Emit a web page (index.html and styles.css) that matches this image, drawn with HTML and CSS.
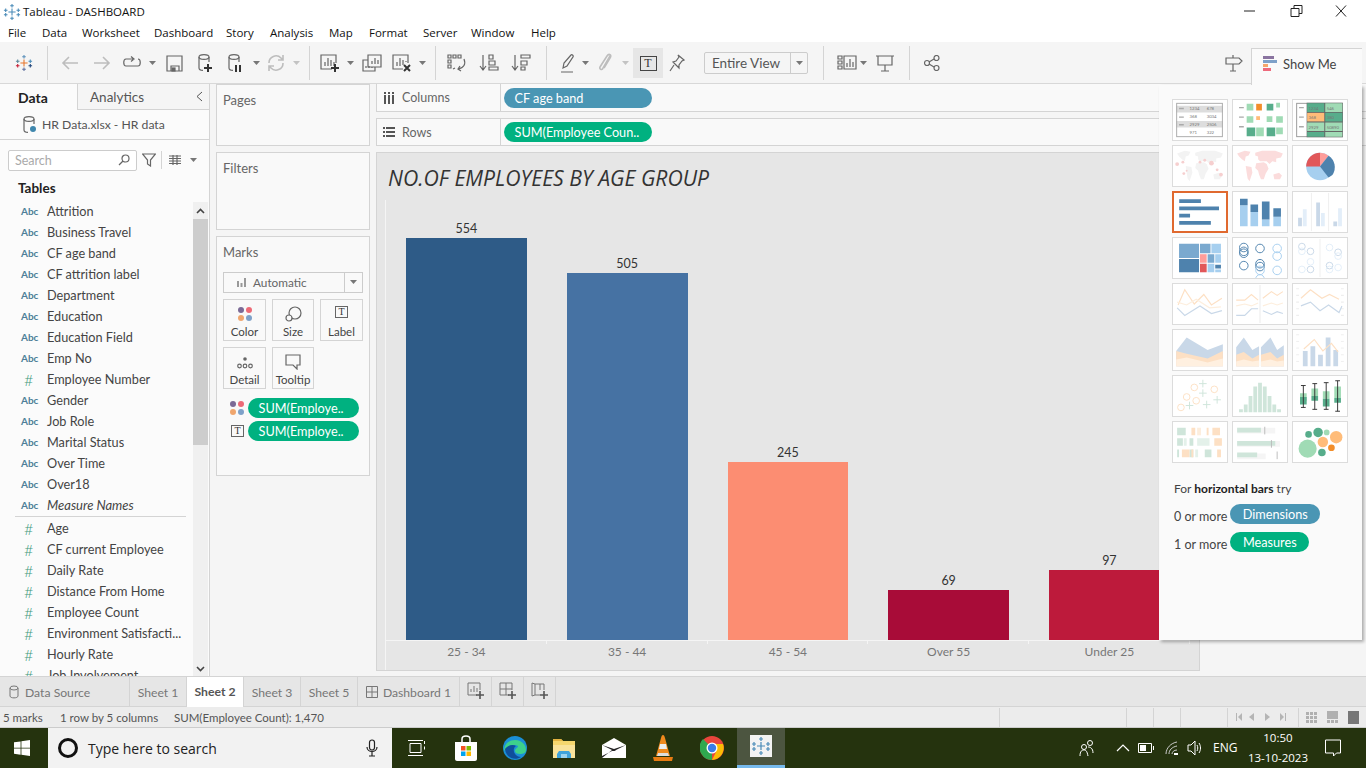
FILE: index.html
```html
<!DOCTYPE html>
<html>
<head>
  <meta charset="UTF-8">
  <title>Tableau - DASHBOARD</title>
  <link rel="stylesheet" href="styles.css">
</head>
<body>
<svg class="defs" width="0" height="0">
  <defs>
    <g id="logo-blue" stroke="#4a8bb8" stroke-width="1.2" fill="none">
      <path d="M10 6v8M6 10h8M10 1v4M8 3h4M10 15v4M8 17h4M3 6v4M1 8h4M17 6v4M15 8h4M3 11v4M1 13h4M17 11v4M15 13h4"/>
    </g>
    <g id="world">
      <path d="M4 8l8-3 6 1-2 4-3 1-1 5-3-2-3-3zM13 21l6 1 1 6-3 9-2-3-1-6zM23 7l7-2 14 0 8 3-2 4-5 1 0 4-4-1-3 3-3-3-7 0-2-2 0-3 -3-1zM24 18l8-1 3 2 2 5-3 5-2 6-3 0-2-5-1-4-3-3zM42 30l6-2 3 3-2 4-6 0z"/>
    </g>
    <g id="cyl" fill="none" stroke="#666" stroke-width="1.2">
      <ellipse cx="8" cy="4" rx="5" ry="2.4"/>
      <path d="M3 4v11c0 1.5 2 2.4 4 2.4M13 4v5"/>
    </g>
    <g id="dots4">
      <circle cx="4" cy="4" r="3" fill="#7b6a96"/><circle cx="12" cy="4" r="3" fill="#ed6a76"/>
      <circle cx="4" cy="12" r="3" fill="#f0a66e"/><circle cx="12" cy="12" r="3" fill="#7ea1c9"/>
    </g>
    <path id="caret" d="M0 0h7l-3.5 4z" fill="#777"/>
  </defs>
</svg>

<div class="app">
  <div class="titlebar">
    <svg class="title-logo" width="18" height="18" viewBox="0 0 20 20"><use href="#logo-blue"/></svg>
    <span class="title-text">Tableau - DASHBOARD</span>
    <div class="win-btns">
      <svg width="46" height="14" viewBox="0 0 46 14"><path d="M13 7h11" stroke="#222" fill="none"/></svg>
      <svg width="46" height="14" viewBox="0 0 46 14"><path d="M14 4.5h8v8h-8zM17 4.500v-3h8v8h-3" stroke="#222" fill="none"/></svg>
      <svg width="46" height="14" viewBox="0 0 46 14"><path d="M13 1.500l10 11M23 1.500l-10 11" stroke="#222" fill="none"/></svg>
    </div>
  </div>

  <div class="menubar">
    <span class="menu-item m-file">File</span>
    <span class="menu-item m-data">Data</span>
    <span class="menu-item m-worksheet">Worksheet</span>
    <span class="menu-item m-dashboard">Dashboard</span>
    <span class="menu-item m-story">Story</span>
    <span class="menu-item m-analysis">Analysis</span>
    <span class="menu-item m-map">Map</span>
    <span class="menu-item m-format">Format</span>
    <span class="menu-item m-server">Server</span>
    <span class="menu-item m-window">Window</span>
    <span class="menu-item">Help</span>
  </div>

  <div class="toolbar">
    <div class="tool w32">
      <svg width="18" height="18" viewBox="0 0 20 20" fill="none" stroke-width="1.2">
        <path d="M10 6v8M6 10h8" stroke="#e8762c"/><path d="M10 1v4M8 3h4" stroke="#5b8fb9"/><path d="M10 15v4M8 17h4" stroke="#5f6f9e"/>
        <path d="M3 6v4M1 8h4" stroke="#59879b"/><path d="M17 6v4M15 8h4" stroke="#4a8bb8"/><path d="M3 11v4M1 13h4" stroke="#c72037"/><path d="M17 11v4M15 13h4" stroke="#1f447a"/>
      </svg>
    </div>
    <div class="tool-sep w14"></div>
    <div class="tool w32"><svg width="18" height="16" viewBox="0 0 18 16" class="stroke-off"><path d="M17 8H2M8 2L2 8l6 6"/></svg></div>
    <div class="tool w32"><svg width="18" height="16" viewBox="0 0 18 16" class="stroke-off"><path d="M1 8h15M10 2l6 6-6 6"/></svg></div>
    <div class="tool w28"><svg width="20" height="14" viewBox="0 0 20 14" class="stroke-on"><path d="M11 3H4C1 3 1 10 4 10h12c3 0 3-7 0-7M9 0.500l3 2.500-3 2.500"/></svg></div>
    <div class="tool w12"><svg width="7" height="4"><use href="#caret"/></svg></div>
    <div class="tool w32"><svg width="17" height="17" viewBox="0 0 17 17" class="stroke-on"><path d="M1 1h15v15H1zM5 16v-5h8v5"/><rect x="6" y="13" width="3" height="3" fill="#666"/></svg></div>
    <div class="tool w30"><svg width="18" height="20" viewBox="0 0 18 20"><use href="#cyl"/><path d="M12 11v8M8 15h8" stroke="#333" stroke-width="2"/></svg></div>
    <div class="tool w30"><svg width="18" height="20" viewBox="0 0 18 20"><use href="#cyl"/><path d="M10 12v7M14 12v7" stroke="#333" stroke-width="2"/></svg></div>
    <div class="tool w12"><svg width="7" height="4"><use href="#caret"/></svg></div>
    <div class="tool w28"><svg width="18" height="18" viewBox="0 0 18 18" class="stroke-off"><path d="M2 9a7 7 0 0 1 12-5l2 2M16 9a7 7 0 0 1-12 5l-2-2M16 1v5h-5M2 17v-5h5"/></svg></div>
    <div class="tool w12"><svg width="7" height="4"><use href="#caret" opacity=".4"/></svg></div>
    <div class="tool-sep w14"></div>
    <div class="tool w28"><svg width="20" height="20" viewBox="0 0 20 20" class="stroke-on"><path d="M12 16H1V2h15v8M5 13V9M8 13V5M11 13V7M14 13V9"/><path d="M15 11v8M11 15h8" stroke="#333" stroke-width="2"/></svg></div>
    <div class="tool w12"><svg width="7" height="4"><use href="#caret"/></svg></div>
    <div class="tool w32"><svg width="20" height="18" viewBox="0 0 20 18" class="stroke-on"><path d="M6 1h13v12H6zM10 10V7M13 10V4M16 10V6"/><path d="M6 6H1v11h12v-4M4 14v-2M7 14v-2M10 14v-1"/></svg></div>
    <div class="tool w28"><svg width="20" height="20" viewBox="0 0 20 20" class="stroke-on"><path d="M11 16H1V2h15v8M5 13V9M8 13V5M11 12V7M14 9V8"/><path d="M12 12l6 6M18 12l-6 6" stroke="#333" stroke-width="2"/></svg></div>
    <div class="tool w12"><svg width="7" height="4"><use href="#caret"/></svg></div>
    <div class="tool-sep w14"></div>
    <div class="tool w30"><svg width="20" height="18" viewBox="0 0 20 18" class="stroke-on"><path d="M1 1h3v3H1zM6 1h3v3H6zM11 1h3v3h-3zM1 6h3v3H1zM1 11h3v3H1zM17 5c2 5 0 9-6 10M13 12l-2 3 3 2M6 15l2-1"/></svg></div>
    <div class="tool w34"><svg width="20" height="18" viewBox="0 0 20 18" class="stroke-on"><path d="M4 1v14M1 12l3 4 3-4M10 1h4v4h-4zM10 7h6v4h-6zM10 13h9v3h-9z"/></svg></div>
    <div class="tool w30"><svg width="20" height="18" viewBox="0 0 20 18" class="stroke-on"><path d="M4 1v14M1 12l3 4 3-4M10 1h9v3h-9zM10 7h6v4h-6zM10 13h4v3h-4z"/></svg></div>
    <div class="tool-sep w20"></div>
    <div class="tool w24"><svg width="14" height="20" viewBox="0 0 14 20" class="stroke-on"><path d="M2 15l1-5 7-8c1-1 3 1 2 2l-6 9zM0 19h12"/></svg></div>
    <div class="tool w10"><svg width="7" height="4"><use href="#caret"/></svg></div>
    <div class="tool w30"><svg width="14" height="20" viewBox="0 0 14 20" class="stroke-off"><path d="M12 3L5 15c-1 3-4 1-3-1l7-11c2-3 5-1 3 2L6 15"/></svg></div>
    <div class="tool w10"><svg width="7" height="4"><use href="#caret" opacity=".4"/></svg></div>
    <div class="tool w30 tool-active"><span class="t-box">T</span></div>
    <div class="tool w28"><svg width="16" height="18" viewBox="0 0 16 18" class="stroke-on"><path d="M9 1l6 5-2 1-3 4 0 3-6-6 3-1 3-4zM5 11l-4 6"/></svg></div>
    <div class="fit-combo"><span class="fit-text">Entire View</span><span class="fit-arrow"><svg width="7" height="4"><use href="#caret"/></svg></span></div>
    <div class="tool-sep w30"></div>
    <div class="tool w18"><svg width="20" height="16" viewBox="0 0 20 16" class="stroke-on"><path d="M1 1h4v3H1zM1 6h4v3H1zM1 11h4v3H1zM7 1h12v13H7zM10 12V8M13 12V4M16 12V7"/></svg></div>
    <div class="tool w14"><svg width="7" height="4"><use href="#caret"/></svg></div>
    <div class="tool w30"><svg width="18" height="18" viewBox="0 0 18 18" class="stroke-on"><path d="M0 2h18M2 2v9h14V2M9 11v6M5 17h8"/></svg></div>
    <div class="tool-sep w18"></div>
    <div class="tool w28"><svg width="16" height="16" viewBox="0 0 16 16" class="stroke-on"><circle cx="3" cy="8" r="2.500"/><circle cx="12.500" cy="3" r="2.500"/><circle cx="12.500" cy="13" r="2.500"/><path d="M5 7l5-3M5 9l5 3"/></svg></div>
    <div class="tool w28 tool-sign"><svg width="18" height="18" viewBox="0 0 18 18" class="stroke-on"><path d="M1 4h13l3 3-3 3H1zM8 1v3M8 10v7M5 17h6"/></svg></div>
  </div>

  <div class="main">
    <div class="data-pane">
      <div class="pane-tabs">
        <div class="pane-tab pane-tab-on">Data</div>
        <div class="pane-tab pane-tab-off">Analytics<svg width="7" height="11" viewBox="0 0 7 11" class="collapse"><path d="M6 1L1 5.500l5 4.500" stroke="#555" fill="none"/></svg></div>
      </div>
      <div class="source-row">
        <svg width="16" height="18" viewBox="0 0 16 18"><use href="#cyl"/><circle cx="12" cy="14" r="3" fill="#3f87ad"/></svg>
        <span>HR Data.xlsx - HR data</span>
      </div>
      <div class="search-row">
        <div class="search-box"><span>Search</span>
          <svg width="12" height="12" viewBox="0 0 12 12" class="stroke-on"><circle cx="7.500" cy="4.500" r="3.500"/><path d="M5 7l-4 4"/></svg>
        </div>
        <svg class="filter-ico stroke-on" width="14" height="14" viewBox="0 0 14 14"><path d="M0.500 1h13L8.500 7v6l-3-2V7z"/></svg>
        <div class="search-sep"></div>
        <svg width="12" height="10" viewBox="0 0 12 10" class="stroke-on"><path d="M0 1h12M0 3.500h12M0 6h12M0 8.500h12M4 0v10M8 0v10"/></svg>
        <svg class="search-caret" width="9" height="5"><use href="#caret"/></svg>
      </div>
      <div class="tables-head">Tables</div>
      <div class="list-wrap">
        <div class="field-list">
          <div class="field"><span class="abc">Abc</span>Attrition</div>
          <div class="field"><span class="abc">Abc</span>Business Travel</div>
          <div class="field"><span class="abc">Abc</span>CF age band</div>
          <div class="field"><span class="abc">Abc</span>CF attrition label</div>
          <div class="field"><span class="abc">Abc</span>Department</div>
          <div class="field"><span class="abc">Abc</span>Education</div>
          <div class="field"><span class="abc">Abc</span>Education Field</div>
          <div class="field"><span class="abc">Abc</span>Emp No</div>
          <div class="field"><span class="hash">#</span>Employee Number</div>
          <div class="field"><span class="abc">Abc</span>Gender</div>
          <div class="field"><span class="abc">Abc</span>Job Role</div>
          <div class="field"><span class="abc">Abc</span>Marital Status</div>
          <div class="field"><span class="abc">Abc</span>Over Time</div>
          <div class="field"><span class="abc">Abc</span>Over18</div>
          <div class="field field-em"><span class="abc">Abc</span>Measure Names</div>
          <div class="list-div"></div>
          <div class="field"><span class="hash">#</span>Age</div>
          <div class="field"><span class="hash">#</span>CF current Employee</div>
          <div class="field"><span class="hash">#</span>Daily Rate</div>
          <div class="field"><span class="hash">#</span>Distance From Home</div>
          <div class="field"><span class="hash">#</span>Employee Count</div>
          <div class="field"><span class="hash">#</span>Environment Satisfacti...</div>
          <div class="field"><span class="hash">#</span>Hourly Rate</div>
          <div class="field"><span class="hash">#</span>Job Involvement</div>
        </div>
        <div class="scrollbar">
          <svg width="9" height="6" viewBox="0 0 9 6" class="sb-arrow"><path d="M1 5l3.500-3.500L8 5" stroke="#444" stroke-width="1.600" fill="none"/></svg>
          <div class="sb-thumb"></div>
          <svg width="9" height="6" viewBox="0 0 9 6" class="sb-arrow sb-down"><path d="M1 1l3.500 3.500L8 1" stroke="#444" stroke-width="1.600" fill="none"/></svg>
        </div>
      </div>
    </div>

    <div class="cards">
      <div class="card card-pages">Pages</div>
      <div class="card card-filters">Filters</div>
      <div class="card card-marks">
        <div>Marks</div>
        <div class="mark-type">
          <svg width="11" height="9" viewBox="0 0 11 9"><path d="M1 3h2v6H1zM4.500 5h2v4h-2zM8 0h2v9H8z" fill="#999"/></svg>
          <span class="mark-type-text">Automatic</span>
          <span class="mark-type-arrow"><svg width="7" height="4"><use href="#caret"/></svg></span>
        </div>
        <div class="mark-btns">
          <div class="mark-btn"><svg width="16" height="16" viewBox="0 0 16 16"><use href="#dots4"/></svg>Color</div>
          <div class="mark-btn"><svg width="17" height="16" viewBox="0 0 17 16" class="stroke-on"><circle cx="10" cy="7" r="6"/><circle cx="4" cy="12" r="3" fill="#fafafa"/></svg>Size</div>
          <div class="mark-btn"><span class="t-box t-small">T</span>Label</div>
          <div class="mark-btn"><svg width="16" height="16" viewBox="0 0 16 16" class="stroke-on"><circle cx="8" cy="5" r="1.800" fill="#666" stroke="none"/><circle cx="2.500" cy="12" r="1.800"/><circle cx="8" cy="12" r="1.800"/><circle cx="13.500" cy="12" r="1.800"/></svg>Detail</div>
          <div class="mark-btn"><svg width="16" height="16" viewBox="0 0 16 16" class="stroke-on"><path d="M1 1h14v10h-3v4l-4-4H1z"/></svg>Tooltip</div>
        </div>
        <div class="mark-pill-row mark-pill-color">
          <svg width="16" height="16" viewBox="0 0 16 16"><use href="#dots4"/></svg>
          <span class="pill pill-green pill-mark">SUM(Employe..</span>
        </div>
        <div class="mark-pill-row mark-pill-label">
          <span class="t-box t-small">T</span>
          <span class="pill pill-green pill-mark">SUM(Employe..</span>
        </div>
      </div>
    </div>

    <div class="view-col">
      <div class="shelf">
        <div class="shelf-label"><svg width="12" height="12" viewBox="0 0 12 12"><path d="M1 0h2v2H1zM5 0h2v2H5zM9 0h2v2H9zM1 3h2v9H1zM5 3h2v9H5zM9 3h2v9H9z" fill="#555"/></svg>Columns</div>
        <span class="pill pill-blue pill-shelf">CF age band</span>
      </div>
      <div class="shelf">
        <div class="shelf-label"><svg width="12" height="12" viewBox="0 0 12 12"><path d="M0 1h2v2H0zM3 1h9v2H3zM0 5h2v2H0zM3 5h9v2H3zM0 9h2v2H0zM3 9h9v2H3z" fill="#555"/></svg>Rows</div>
        <span class="pill pill-green pill-shelf">SUM(Employee Coun..</span>
      </div>
      <div class="viz">
        <div class="viz-title">NO.OF EMPLOYEES BY AGE GROUP</div>
        <div class="plot">
          <div class="plot-col">
            <div class="bar-area"><span class="bar-val">554</span><div class="bar bar-a" style="height:402px"></div></div>
            <div class="bar-label">25 - 34</div>
          </div>
          <div class="plot-col">
            <div class="bar-area"><span class="bar-val">505</span><div class="bar bar-b" style="height:367px"></div></div>
            <div class="bar-label">35 - 44</div>
          </div>
          <div class="plot-col">
            <div class="bar-area"><span class="bar-val">245</span><div class="bar bar-c" style="height:178px"></div></div>
            <div class="bar-label">45 - 54</div>
          </div>
          <div class="plot-col">
            <div class="bar-area"><span class="bar-val">69</span><div class="bar bar-d" style="height:50px"></div></div>
            <div class="bar-label">Over 55</div>
          </div>
          <div class="plot-col">
            <div class="bar-area"><span class="bar-val">97</span><div class="bar bar-e" style="height:70px"></div></div>
            <div class="bar-label">Under 25</div>
          </div>
        </div>
      </div>
    </div>
  </div>

  <div class="tabs">
    <div class="tab tab-ds"><svg width="12" height="14" viewBox="0 0 12 14" class="stroke-tab"><ellipse cx="6" cy="3" rx="4" ry="2"/><path d="M2 3v8c0 2.500 8 2.500 8 0V3"/></svg>Data Source</div>
    <div class="tab tab-sheet">Sheet 1</div>
    <div class="tab tab-sheet tab-on">Sheet 2</div>
    <div class="tab tab-sheet">Sheet 3</div>
    <div class="tab tab-sheet">Sheet 5</div>
    <div class="tab tab-dash"><svg width="12" height="12" viewBox="0 0 12 12" class="stroke-tab"><path d="M0.500 0.500h11v11h-11zM6 0.500v11M0.500 6h11"/></svg>Dashboard 1</div>
    <div class="tab tab-add"><svg width="18" height="18" viewBox="0 0 18 18" class="stroke-tab"><path d="M10 13H1V1h12v7M4 10V7M7 10V4M10 10V6"/><path d="M13 9v8M9 13h8" stroke="#555" stroke-width="1.600"/></svg></div>
    <div class="tab tab-add"><svg width="18" height="18" viewBox="0 0 18 18" class="stroke-tab"><path d="M10 13H1V1h12v7M7 1v12M1 7h12"/><path d="M13 9v8M9 13h8" stroke="#555" stroke-width="1.600"/></svg></div>
    <div class="tab tab-add"><svg width="18" height="18" viewBox="0 0 18 18" class="stroke-tab"><path d="M9 13H4L1 14V1l3 1h9v6M4 2v11M9 2v6"/><path d="M13 9v8M9 13h8" stroke="#555" stroke-width="1.600"/></svg></div>
  </div>

  <div class="status">
    <span class="st-marks">5 marks</span>
    <span class="st-rows">1 row by 5 columns</span>
    <span>SUM(Employee Count): 1,470</span>
    <div class="st-cells">
      <div class="st-cell st-w127"></div>
      <div class="st-cell st-w27"></div>
      <div class="st-cell st-w27"></div>
      <div class="st-cell st-w47"></div>
      <div class="st-cell st-nav">
        <svg width="60" height="10" viewBox="0 0 60 10" fill="#b5b5b5"><path d="M1 1h1v8H1zM7 1v8L3 5zM19 1v8l-5-4zM30 1v8l5-4zM45 1v8l4-4zM50 1h1v8h-1z"/></svg>
      </div>
      <div class="st-cell st-views">
        <svg width="11" height="11" viewBox="0 0 11 11" fill="#b0b0b0"><path d="M0 0h3v3H0zM4 0h3v3H4zM8 0h3v3H8zM0 4h3v3H0zM4 4h3v3H4zM8 4h3v3H8zM0 8h3v3H0zM4 8h3v3H4zM8 8h3v3H8z"/></svg>
        <svg width="11" height="12" viewBox="0 0 11 12" fill="#b0b0b0"><path d="M0 0h11v8H0zM0 9h3v3H0zM4 9h3v3H4zM8 9h3v3H8z"/></svg>
        <svg width="11" height="13" viewBox="0 0 11 13"><path d="M0 0h11v13H0z" fill="#777"/></svg>
      </div>
    </div>
  </div>

  <div class="taskbar">
    <div class="start"><svg width="16" height="16" viewBox="0 0 16 16" fill="#fff"><path d="M0 2.300l6.600-.9v6.300H0zM7.400 1.300L16 0v7.700H7.400zM0 8.400h6.600v6.300L0 13.800zM7.400 8.400H16V16l-8.600-1.200z"/></svg></div>
    <div class="task-search">
      <span class="cortana"></span>
      <span class="task-search-text">Type here to search</span>
      <svg width="12" height="18" viewBox="0 0 12 18" fill="none" stroke="#222" stroke-width="1.200"><rect x="3.500" y="1" width="5" height="10" rx="2.500"/><path d="M1 8c0 6 10 6 10 0M6 13v4M3 17h6"/></svg>
    </div>
    <div class="task-ico"><svg width="18" height="18" viewBox="0 0 18 18" fill="none" stroke="#fff"><path d="M2 4.500h11v9H2zM0 1.500h15M0 16.500h15M16.500 2v3M16.500 7.500v3"/></svg></div>
    <div class="task-ico"><svg width="24" height="26" viewBox="0 0 24 26"><path d="M8 7V4c0-4 8-4 8 0v3" fill="none" stroke="#fff" stroke-width="1.500"/><path d="M1 7h22v17c0 1-1 2-2 2H3c-1 0-2-1-2-2z" fill="#fff"/><path d="M7 11h4.500v4.500H7z" fill="#f25022"/><path d="M12.500 11H17v4.500h-4.500z" fill="#7fba00"/><path d="M7 16.500h4.500V21H7z" fill="#00a4ef"/><path d="M12.500 16.500H17V21h-4.500z" fill="#ffb900"/></svg></div>
    <div class="task-ico"><svg width="24" height="24" viewBox="0 0 24 24"><circle cx="12" cy="12" r="12" fill="#1b8fd6"/><path d="M1 15C1 5 11 2 17 5c4 2 6 5 6 9 0 3-3 4-6 4-3 0-5-1-5-3 0-3 3-3 3-5-3-2-10-1-14 5z" fill="#3dd08c"/><path d="M2 13c3-4 8-5 11-3 -3 2-3 6 0 9 1 1 3 2 5 2-6 4-15 1-16-8z" fill="#0f4f9c"/></svg></div>
    <div class="task-ico"><svg width="24" height="22" viewBox="0 0 24 22"><path d="M1 2h8l2 2h12v17H1z" fill="#f5d76e"/><path d="M1 2h8l2 2H1z" fill="#e3b341"/><path d="M1 8h22v13H1z" fill="#f9e39a"/><path d="M7 14h10l2 3v4H5v-4z" fill="#3fa4dc"/><path d="M9 17h6v4H9z" fill="#9bd4f0"/></svg></div>
    <div class="task-ico"><svg width="24" height="20" viewBox="0 0 24 20"><path d="M0 7L12 0l12 7v13H0z" fill="#fff"/><path d="M0 7l12 6 12-6-9 3-3 1-3-1z" fill="#222"/><path d="M0 20l10-8 2 1 2-1-2 0L0 18z" fill="#222"/></svg></div>
    <div class="task-ico"><svg width="20" height="26" viewBox="0 0 20 26"><path d="M10 0c1 0 1.500 1 2 3l5 18H3L8 3c.5-2 1-3 2-3z" fill="#f08a1d"/><path d="M7 9h6l1 5H6z" fill="#eee"/><path d="M5 18h10l1 3H4z" fill="#ddd"/><path d="M0 22h20l-1 4H1z" fill="#e87c12"/></svg></div>
    <div class="task-ico"><svg width="24" height="24" viewBox="0 0 24 24"><circle cx="12" cy="12" r="12" fill="#e8453c"/><path d="M12 12L1.500 18A12 12 0 0 1 3 3z" fill="#2fa84f"/><path d="M12 24A12 12 0 0 1 1.500 18L7 9l5 3z" fill="#2fa84f"/><path d="M12 24a12 12 0 0 0 11-16H12l4 8z" fill="#fbbc05"/><circle cx="12" cy="12" r="5.500" fill="#fff"/><circle cx="12" cy="12" r="4.200" fill="#3a7de8"/></svg></div>
    <div class="task-ico task-tableau"><svg width="24" height="24" viewBox="0 0 24 24"><rect x="1" y="1" width="22" height="22" fill="#f3f3f3"/><svg x="2" y="2" width="20" height="20" viewBox="0 0 20 20"><use href="#logo-blue"/></svg></svg></div>
    <div class="tray">
      <svg width="16" height="18" viewBox="0 0 16 18" fill="none" stroke="#fff"><circle cx="11" cy="4" r="2.500"/><circle cx="5" cy="8" r="2.500"/><path d="M1 17c0-5 2-6 4-6s3 1 4 6M9 8c2 0 5 1 5 6"/></svg>
      <svg class="tray-up" width="14" height="8" viewBox="0 0 14 8" fill="none" stroke="#fff" stroke-width="1.200"><path d="M1 7l6-6 6 6"/></svg>
      <svg class="tray-batt" width="16" height="10" viewBox="0 0 16 10" fill="none" stroke="#fff"><path d="M.5.500h13v9H.5zM15.500 3v4"/><rect x="2" y="2" width="6" height="6" fill="#fff" stroke="none"/></svg>
      <svg class="tray-wifi" width="14" height="14" viewBox="0 0 14 14" fill="none" stroke="#ccc"><path d="M1 13C1 7 6 2 12 1M4 13c0-4 3-7 8-8M7 13c0-2 2-4 5-4"/><path d="M9 12h4v2H9z" fill="#fff" stroke="none"/></svg>
      <svg class="tray-vol" width="16" height="16" viewBox="0 0 16 16" fill="none" stroke="#fff"><path d="M1 5h3l4-4v14l-4-4H1zM10 5c1 2 1 4 0 6M12 3c2 3 2 7 0 10"/></svg>
      <span class="tray-lang">ENG</span>
      <div class="clock"><div>10:50</div><div>13-10-2023</div></div>
      <svg class="tray-note" width="16" height="18" viewBox="0 0 16 18" fill="none" stroke="#fff"><path d="M.500 1h15v13h-4l-3 3v-3H.5z"/></svg>
    </div>
  </div>

  <div class="showme-tab">
    <svg width="14" height="16" viewBox="0 0 14 16"><rect width="11" height="3" y="0" fill="#8a74a0"/><rect width="14" height="3" y="4" fill="#7ea1c9"/><rect width="5" height="3" y="8" fill="#f5a66b"/><rect width="8" height="3" y="12" fill="#ee6a7c"/></svg>
    <span>Show Me</span>
  </div>
  <div class="showme">
    <div class="gallery">
      <div class="thumb"><svg viewBox="0 0 56 42"><path d="M3 6h49v7H3zM3 22h49v7H3z" fill="#ddd"/><rect x="3.500" y="3.500" width="48" height="35" fill="none" stroke="#aaa"/><path d="M6 9h5M6 18h5M6 26h5" stroke="#aaa" stroke-width="1.500"/><g class="tiny"><text x="17" y="11">1234</text><text x="35" y="11">678</text><text x="17" y="19">368</text><text x="35" y="19">3034</text><text x="17" y="27">2929</text><text x="35" y="27">2506</text><text x="17" y="36">971</text><text x="35" y="36">322</text></g></svg></div>
      <div class="thumb"><svg viewBox="0 0 56 42"><path d="M6 8h5M6 18h5M6 28h5" stroke="#aaa" stroke-width="1.500"/><path d="M14 4h7v7h-7zM14 17h7v7h-7zM24 29h8v9h-8zM35 17h6v6h-6zM45 3h4v5h-4zM45 17h7v7h-7zM45 29h7v7h-7z" fill="#a0dbb5"/><path d="M35 4h7v7h-7zM14 29h9v9h-9zM35 29h9v9h-9z" fill="#57ad8b"/><path d="M24 4h6v7h-6z" fill="#f28e2b"/><path d="M24 17h4v4h-4z" fill="#ffbc79"/></svg></div>
      <div class="thumb"><svg viewBox="0 0 56 42"><rect x="3.500" y="3.500" width="48" height="35" fill="none" stroke="#999"/><path d="M6 8h5M6 18h5M6 28h5" stroke="#aaa" stroke-width="1.500"/><path d="M14 3h38v36H14z" fill="#666"/><path d="M14.500 3.500h18v9h-18zM33.500 13.500h18v9h-18zM14.500 33.500h18v5h-18z" fill="#57ad8b"/><path d="M33.500 3.500h18v9h-18zM14.500 23.500h18v9h-18zM33.500 23.500h18v9h-18zM33.500 33.500h18v5h-18z" fill="#a0dbb5"/><path d="M14.500 13.500h18v9h-18z" fill="#ffbc79"/><g class="tiny"><text x="16" y="10">1234</text><text x="35" y="10">546</text><text x="16" y="20">368</text><text x="35" y="20">380</text><text x="16" y="30">2929</text><text x="35" y="30">50890</text></g></svg></div>

      <div class="thumb"><svg viewBox="0 0 56 42"><use href="#world" fill="#f3f3f3"/><g fill="#f6cfcf"><circle cx="4" cy="19" r="2"/><circle cx="10" cy="17" r="1.500"/><circle cx="28" cy="17" r="1.500"/><circle cx="40" cy="18" r="2.500"/><circle cx="33" cy="15" r="1.500"/><circle cx="46" cy="25" r="1.500"/><circle cx="50" cy="30" r="2"/><circle cx="14" cy="26" r="1"/><circle cx="11" cy="29" r="1.500"/></g></svg></div>
      <div class="thumb"><svg viewBox="0 0 56 42"><use href="#world" fill="#fbdcdc"/></svg></div>
      <div class="thumb"><svg viewBox="0 0 56 42"><circle cx="28" cy="21.500" r="14.500" fill="#a6cfef"/><path d="M28 21.500V7a14.500 14.500 0 0 1 9 3.200z" fill="#ff9d9a"/><path d="M28 21.500l9-11.300a14.500 14.500 0 0 1 4 20.300L37 33z" fill="#4e82ad"/><path d="M28 21.500L13.500 21.500A14.500 14.500 0 0 1 28 7z" fill="#e15759"/></svg></div>

      <div class="thumb thumb-sel"><svg viewBox="0 0 56 42"><path d="M5 7h24v4H5zM5 15h44v4H5zM5 23h12v4H5zM5 31h35v4H5z" fill="#4e82ad"/></svg></div>
      <div class="thumb"><svg viewBox="0 0 56 42"><path d="M7 14h8v22H7zM18 21h8v15h-8zM30 29h8v7h-8zM42 26h8v10h-8z" fill="#a6cfef"/><path d="M7 7h8v7H7zM18 13h8v8h-8zM30 10h8v19h-8zM42 17h8v9h-8z" fill="#4e82ad"/></svg></div>
      <div class="thumb"><svg viewBox="0 0 56 42"><path d="M19 1v40M37 1v40" stroke="#eee"/><path d="M5 27h4v9H5zM24 11h4v25h-4zM42 31h4v5h-4z" fill="#c9d8e8"/><path d="M10 18h4v18h-4zM29 22h4v14h-4zM47 17h4v19h-4z" fill="#e3eef9"/></svg></div>

      <div class="thumb"><svg viewBox="0 0 56 42"><path d="M6 6h21v15H6zM28 6h11v10H28zM36 17h7v9h-7z" fill="#7aa9cf"/><path d="M6 22h21v14H6zM44 28h6v4h-6z" fill="#4e82ad"/><path d="M40 6h10v10H40zM44 17h6v9h-6zM36 27h7v9h-7zM44 33h6v3h-6z" fill="#a6cfef"/><path d="M28 17h7v9h-7z" fill="#ff9d9a"/><path d="M28 27h7v9h-7z" fill="#e15759"/></svg></div>
      <div class="thumb"><svg viewBox="0 0 56 42" fill="none" stroke-width="1"><g stroke="#4e82ad"><circle cx="11" cy="10" r="4.500"/><circle cx="11" cy="14" r="4.500"/><circle cx="11" cy="16" r="4.500"/><circle cx="28" cy="11" r="4.500"/><circle cx="11" cy="29" r="4.500"/><circle cx="28" cy="27" r="4.500"/><circle cx="28" cy="30" r="4.500"/></g><g stroke="#a6cfef"><circle cx="46" cy="11" r="4.500"/><circle cx="46" cy="19" r="4.500"/><circle cx="46" cy="34" r="4.500"/><circle cx="28" cy="34" r="4.500"/><circle cx="28" cy="43" r="4.500"/></g></svg></div>
      <div class="thumb"><svg viewBox="0 0 56 42" fill="none"><path d="M28 1v40" stroke="#eee"/><g stroke="#c9d8e8"><circle cx="9" cy="9" r="3.500"/><circle cx="18" cy="14" r="3.500"/><circle cx="18" cy="33" r="3.500"/><circle cx="47" cy="15" r="3.500"/><circle cx="38" cy="29" r="3.500"/></g><g stroke="#e3eef9"><circle cx="9" cy="14" r="3.500"/><circle cx="18" cy="25" r="3.500"/><circle cx="9" cy="33" r="3.500"/><circle cx="38" cy="10" r="3.500"/><circle cx="47" cy="19" r="3.500"/><circle cx="38" cy="33" r="3.500"/><circle cx="47" cy="31" r="3.500"/></g></svg></div>

      <div class="thumb"><svg viewBox="0 0 56 42" fill="none" stroke-width="1.200"><path d="M5 22L12 6l10 15 10-10 8 11 11-7" stroke="#fde0c4"/><path d="M4 19l10 3 10-6 14 9 12-1" stroke="#fdeedd"/><path d="M4 25l8 8 16-10 12 8 11-3" stroke="#c9d8e8"/></svg></div>
      <div class="thumb"><svg viewBox="0 0 56 42" fill="none" stroke-width="1.200"><path d="M28 1v40" stroke="#eee"/><path d="M3 17l9 0 7-6 7 6M31 15l9-7 6 4 6-4" stroke="#fde0c4"/><path d="M3 23l9-2 7 2 7-3M31 23l9-3 6 2 6-2" stroke="#fdeedd"/><path d="M3 33l9 0 7-7 7 0M31 28l9 4 6-3 6 2" stroke="#c9d8e8"/></svg></div>
      <div class="thumb"><svg viewBox="0 0 56 42" fill="none" stroke-width="1.200"><path d="M3 5h3M3 12h3M3 19h3M3 26h3M3 33h3M50 5h3M50 12h3M50 19h3M50 26h3M50 33h3" stroke="#eee"/><path d="M8 15l10-9 12 9 8-4 10 5" stroke="#fde0c4"/><path d="M8 23l10-4 10 9 9-6 11 8 3-7" stroke="#c9d8e8"/></svg></div>

      <div class="thumb"><svg viewBox="0 0 56 42"><path d="M3 22L14 8l22 13 16-6v23H3z" fill="#c9d8e8"/><path d="M3 22l11 3 22 5 16-8v16H3z" fill="#fde0c4"/><path d="M3 31l11-2 22 5 16-4v8H3z" fill="#fff0e0"/></svg></div>
      <div class="thumb"><svg viewBox="0 0 56 42"><path d="M3 18L11 8l9 13 7-4v21H3zM29 18l10-10 7 13 7-5v22H29z" fill="#c9d8e8"/><path d="M3 26l8-3 9 7 7-4v12H3zM29 26l10-3 7 7 7-4v12H29z" fill="#fde0c4"/><path d="M3 33l8-2 9 2 7-1v6H3zM29 33l10-2 7 2 7-1v6H29z" fill="#fff0e0"/></svg></div>
      <div class="thumb"><svg viewBox="0 0 56 42"><path d="M3 5h3M3 12h3M3 19h3M3 26h3M3 33h3M50 5h3M50 12h3M50 19h3M50 26h3M50 33h3" stroke="#eee"/><path d="M10 22h5v16h-5zM18 17h5v21h-5zM26 26h5v12h-5zM34 8h5v30h-5zM42 21h5v17h-5z" fill="#c9d8e8"/><path d="M11 20l11-10 9 12 9-8 7 9" stroke="#fde0c4" stroke-width="1.200" fill="none"/></svg></div>

      <div class="thumb"><svg viewBox="0 0 56 42" fill="none"><g stroke="#fde0c4"><circle cx="22" cy="12" r="3.500"/><circle cx="43" cy="14" r="3.500"/><circle cx="14" cy="22" r="3.500"/><circle cx="24" cy="26" r="3.500"/><circle cx="8" cy="33" r="3.500"/></g><path d="M31 4v8M27 8h8M31 14v8M27 18h8M17 27v8M13 31h8M35 26v8M31 30h8M46 21v8M42 25h8" stroke="#cfe5da"/></svg></div>
      <div class="thumb"><svg viewBox="0 0 56 42"><path d="M6 35h4v3H6zM11 30h4v8h-4zM16 21h4v17h-4zM21 11h4v27h-4zM26 7h4v31h-4zM31 11h4v27h-4zM36 21h4v17h-4zM41 30h4v8h-4zM46 35h4v3h-4z" fill="#cfe5da"/></svg></div>
      <div class="thumb"><svg viewBox="0 0 56 42"><path d="M7 18h7v8H7zM19 13h7v8h-7zM31 16h7v8h-7zM43 11h7v12h-7z" fill="#a0dbb5"/><path d="M7 22h7v8H7zM19 21h7v5h-7zM31 24h7v8h-7zM43 23h7v5h-7z" fill="#57ad8b"/><path d="M8 10h5M10.500 10v23M8 33h5M20 8h5M22.500 8v27M20 35h5M32 7h5M34.500 7v28M32 35h5M44 5h5M46.500 5v32M44 37h5" stroke="#333" stroke-width="1"/></svg></div>

      <div class="thumb"><svg viewBox="0 0 56 42"><path d="M4 6h9v8H4zM4 17h6v8H4zM17 17h4v8h-4zM17 29h4v8h-4zM4 29h2v8H4zM33 29h7v8h-7z" fill="#cfe5da"/><path d="M11 17h3v8h-3zM25 17h13v8H25zM23 29h3v8h-3z" fill="#e4f1ea"/><path d="M19 6h4v8h-4zM35 6h2v8h-2zM41 6h8v8h-8zM43 17h8v8h-8zM9 29h8v8H9zM46 29h4v8h-4zM19 29h2v8h-2z" fill="#fde0c4"/><path d="M25 6h4v8h-4z" fill="#fdeedd"/></svg></div>
      <div class="thumb"><svg viewBox="0 0 56 42"><path d="M4 6h40v6H4zM4 20h45v6H4zM4 33h30v6H4z" fill="#f5f5f5"/><path d="M4 6h25v5H4zM4 20h40v5H4zM4 32h21v5H4z" fill="#cfe5da"/><path d="M33 5v8M40 19v8M46 31v8" stroke="#bbb" stroke-width="1"/></svg></div>
      <div class="thumb"><svg viewBox="0 0 56 42"><circle cx="15" cy="28" r="9.500" fill="#a0dbb5"/><circle cx="16" cy="13" r="3.500" fill="#57ad8b"/><circle cx="26" cy="11" r="5" fill="#57ad8b"/><circle cx="35" cy="11" r="3" fill="#a0dbb5"/><circle cx="31" cy="21" r="5.500" fill="#ffbc79"/><circle cx="45" cy="16" r="6.500" fill="#ffbc79"/><circle cx="40" cy="27" r="3.500" fill="#f28e2b"/><circle cx="30" cy="32" r="4" fill="#57ad8b"/></svg></div>
    </div>
    <div class="hint hint-top">For <b>horizontal bars</b> try</div>
    <div class="hint hint-row hint-a">0 or more <span class="pill pill-blue pill-dim">Dimensions</span></div>
    <div class="hint hint-row">1 or more <span class="pill pill-green pill-meas">Measures</span></div>
  </div>
</div>
</body>
</html>
```

FILE: styles.css
```css
html, body {
  margin: 0;
  height: 100%;
  overflow: hidden;
}
body {
  font-family: "Lato", "Open Sans", sans-serif;
  font-size: 12.5px;
  color: #333;
  background: #f5f5f5;
}
.defs { position: absolute; }
svg { display: block; flex: none; }

.app {
  position: relative;
  width: 1366px;
  height: 768px;
  display: flex;
  flex-direction: column;
  overflow: hidden;
}

/* window chrome */
.titlebar {
  height: 22px;
  box-sizing: border-box;
  padding-top: 2px;
  display: flex;
  align-items: center;
  background: #fff;
  font-family: "Open Sans", sans-serif;
  font-size: 11.5px;
  color: #111;
}
.title-logo { margin-left: 3px; }
.title-text { margin-left: 2px; }
.win-btns { margin-left: auto; margin-right: -3px; display: flex; margin-top: -1px; }

.menubar {
  height: 21px;
  display: flex;
  align-items: center;
  background: #fff;
  padding-left: 8px;
  font-family: "Open Sans", sans-serif;
  font-size: 11.5px;
  color: #111;
}
.menu-item { display: block; }
.m-file { width: 34px; }
.m-data { width: 40px; }
.m-worksheet { width: 72px; }
.m-dashboard { width: 72px; }
.m-story { width: 44px; }
.m-analysis { width: 59px; }
.m-map { width: 40px; }
.m-format { width: 54px; }
.m-server { width: 48px; }
.m-window { width: 60px; }

.toolbar {
  height: 41px;
  box-sizing: border-box;
  padding-top: 1px;
  display: flex;
  align-items: center;
  padding-left: 8px;
  background: #f5f5f5;
}
.tool {
  height: 30px;
  display: flex;
  align-items: center;
  justify-content: center;
  flex: none;
}
.tool-sep {
  height: 34px;
  flex: none;
  display: flex;
  justify-content: center;
}
.tool-sep::before { content: ""; width: 1px; background: #d4d4d4; }
.w10 { width: 10px; }
.w12 { width: 12px; }
.w14 { width: 14px; }
.w18 { width: 18px; }
.w20 { width: 20px; }
.w24 { width: 24px; }
.w28 { width: 28px; }
.w30 { width: 30px; }
.w32 { width: 32px; }
.w34 { width: 34px; }
.tool-active { background: #e6e6e6; margin-left: 3px; }
.tool-sign { margin-left: auto; margin-right: 118px; }
.stroke-on { fill: none; stroke: #666; stroke-width: 1.2; }
.stroke-off { fill: none; stroke: #bdbdbd; stroke-width: 1.6; }
.stroke-tab { fill: none; stroke: #777; stroke-width: 1; }

.t-box {
  display: block;
  width: 15px;
  height: 13px;
  border: 1px solid #444;
  font-family: "Liberation Serif", serif;
  font-size: 12px;
  line-height: 13px;
  text-align: center;
  color: #333;
}
.t-small { width: 11px; height: 10px; font-size: 10px; line-height: 10px; border-color: #666; }

.fit-combo {
  margin-left: 13px;
  width: 104px;
  height: 22px;
  box-sizing: border-box;
  border: 1px solid #ccc;
  border-radius: 2px;
  display: flex;
  align-items: center;
  font-size: 13.5px;
  color: #555;
  flex: none;
}
.fit-text { width: 85px; padding-left: 7px; box-sizing: border-box; }
.fit-arrow {
  flex: 1;
  height: 100%;
  border-left: 1px solid #ccc;
  display: flex;
  align-items: center;
  justify-content: center;
}

/* main area */
.main {
  height: 593px;
  display: flex;
  background: #f5f5f5;
  border-top: 1px solid #d8d8d8;
  box-sizing: border-box;
}

.data-pane {
  width: 210px;
  flex: none;
  background: #fbfbfb;
  border-right: 1px solid #d4d4d4;
  box-sizing: border-box;
  display: flex;
  flex-direction: column;
  overflow: hidden;
}
.pane-tabs { display: flex; height: 26px; flex: none; }
.pane-tab { display: flex; align-items: center; font-size: 13.5px; padding-top: 1px; box-sizing: border-box; }
.pane-tab-on { width: 77px; padding-left: 18px; font-size: 14px; font-weight: 700; color: #222; }
.pane-tab-off {
  flex: 1;
  padding-left: 12px;
  background: #f5f5f5;
  border-left: 1px solid #d4d4d4;
  border-bottom: 1px solid #d4d4d4;
  color: #555;
}
.collapse { margin-left: auto; margin-right: 6px; }
.source-row {
  height: 30px;
  flex: none;
  box-sizing: border-box;
  display: flex;
  align-items: center;
  gap: 5px;
  padding-left: 21px;
  border-bottom: 1px solid #d4d4d4;
  font-size: 12.2px;
  color: #555;
}
.search-row {
  height: 23px;
  margin-top: 9px;
  flex: none;
  display: flex;
  align-items: center;
}
.search-box {
  margin-left: 8px;
  width: 129px;
  height: 21px;
  box-sizing: border-box;
  border: 1px solid #ccc;
  border-radius: 2px;
  background: #fff;
  display: flex;
  align-items: center;
  justify-content: space-between;
  padding: 0 6px;
  color: #aaa;
}
.filter-ico { margin-left: 5px; }
.search-sep { width: 1px; height: 18px; background: #d4d4d4; margin: 0 7px 0 5px; }
.search-caret { margin-left: 9px; }
.tables-head {
  height: 28px;
  flex: none;
  padding-left: 18px;
  display: flex;
  align-items: center;
  font-size: 13.5px;
  font-weight: 700;
  color: #222;
  margin-top: 2px;
}
.list-wrap { flex: 1; display: flex; min-height: 0; overflow: hidden; }
.field-list { width: 193px; flex: none; margin-top: -1px; }
.field {
  height: 21px;
  display: flex;
  align-items: center;
  white-space: nowrap;
  font-size: 12.7px;
  color: #444;
}
.field-em { font-style: italic; font-size: 13px; }
.abc {
  width: 47px;
  padding-left: 21px;
  box-sizing: border-box;
  font-size: 10px;
  font-weight: 700;
  font-style: normal;
  color: #4d7f98;
  flex: none;
}
.hash {
  width: 47px;
  padding-left: 24px;
  box-sizing: border-box;
  font-size: 16px;
  font-weight: 300;
  font-style: normal;
  color: #3f9a7c;
  flex: none;
}
.list-div { height: 1px; margin: 0 7px 1px 15px; background: #d4d4d4; }
.scrollbar {
  width: 15px;
  flex: none;
  background: #f0f0f0;
  display: flex;
  flex-direction: column;
  align-items: center;
}
.sb-arrow { margin-top: 6px; }
.sb-thumb { width: 15px; height: 226px; margin-top: 5px; background: #cdcdcd; }
.sb-down { margin-top: auto; margin-bottom: 4px; }

.cards {
  width: 154px;
  margin-left: 6px;
  flex: none;
  display: flex;
  flex-direction: column;
  gap: 6px;
}
.card {
  box-sizing: border-box;
  background: #f9f9f9;
  border: 1px solid #d4d4d4;
  padding: 7px 6px 0;
  color: #666;
  font-size: 13px;
}
.card-pages { height: 62px; }
.card-filters { height: 78px; }
.card-marks { height: 240px; }
.mark-type {
  margin-top: 12px;
  height: 21px;
  box-sizing: border-box;
  border: 1px solid #ccc;
  display: flex;
  align-items: center;
  font-size: 11.8px;
  color: #666;
  padding-left: 12px;
}
.mark-type-text { margin-left: 6px; }
.mark-type-arrow {
  margin-left: auto;
  width: 17px;
  height: 100%;
  border-left: 1px solid #ccc;
  display: flex;
  align-items: center;
  justify-content: center;
}
.mark-btns {
  margin-top: 6px;
  display: grid;
  grid-template-columns: 43px 42px 43px;
  grid-auto-rows: 42px;
  gap: 6px;
}
.mark-btn {
  box-sizing: border-box;
  border: 1px solid #d4d4d4;
  display: flex;
  flex-direction: column;
  align-items: center;
  justify-content: space-between;
  padding: 6px 0 2px;
  font-size: 11.5px;
  color: #444;
}
.mark-pill-row { display: flex; align-items: center; height: 20px; margin-top: 3px; }
.mark-pill-color { margin-top: 9px; padding-left: 6px; }
.mark-pill-label { padding-left: 8px; }

.pill {
  display: flex;
  align-items: center;
  height: 20px;
  border-radius: 10px;
  color: #fff;
  font-size: 12.7px;
  box-sizing: border-box;
  padding-left: 10.5px;
  white-space: nowrap;
}
.pill-blue { background: #4a96b4; }
.pill-green { background: #00b180; }
.pill-shelf { width: 148px; margin-left: 3px; margin-top: 1px; }
.pill-mark { width: 111px; margin-left: auto; margin-right: 4px; }
.pill-dim { width: 90px; justify-content: center; padding: 0; margin-left: 3px; margin-top: -5px; }
.pill-meas { width: 79px; justify-content: center; padding: 0; margin-left: 3px; margin-top: -5px; }

.view-col {
  flex: 1;
  margin-left: 6px;
  display: flex;
  flex-direction: column;
  min-width: 0;
}
.shelf {
  height: 28px;
  box-sizing: border-box;
  margin-bottom: 6px;
  background: #f9f9f9;
  border: 1px solid #d4d4d4;
  border-width: 0 0 1px 1px;
  display: flex;
  align-items: center;
}
.shelf + .shelf { border-top: 1px solid #d4d4d4; }
.shelf-label {
  width: 124px;
  height: 100%;
  box-sizing: border-box;
  border-right: 1px solid #d4d4d4;
  display: flex;
  align-items: center;
  gap: 7px;
  padding: 1px 0 0 6px;
  color: #666;
  flex: none;
}
.viz {
  width: 824px;
  height: 519px;
  box-sizing: border-box;
  background: #e6e6e6;
  border: 1px solid #d4d4d4;
  display: flex;
  flex-direction: column;
}
.viz-title {
  height: 47px;
  display: flex;
  align-items: center;
  padding: 3px 0 0 11px;
  box-sizing: border-box;
  font-family: "Open Sans", sans-serif;
  font-style: italic;
  font-weight: 500;
  font-size: 21.2px;
  color: #333;
  white-space: nowrap;
}
.plot {
  height: 470px;
  margin-left: 8px;
  display: grid;
  grid-template-columns: repeat(5, 160.75px);
  border-left: 1px solid #f5f5f5;
}
.plot-col { display: flex; flex-direction: column; position: relative; }
.bar-area {
  height: 441px;
  box-sizing: border-box;
  display: flex;
  flex-direction: column;
  justify-content: flex-end;
  align-items: center;
  border-bottom: 1px solid #f5f5f5;
}
.plot-col::after {
  content: "";
  position: absolute;
  right: 0;
  top: 441px;
  width: 1px;
  height: 3px;
  background: #f5f5f5;
}
.bar-val { font-size: 12.5px; color: #333; line-height: 20px; margin-bottom: -1px; }
.bar { width: 120.75px; }
.bar-a { background: #2e5b87; }
.bar-b { background: #4672a3; }
.bar-c { background: #fc8d72; }
.bar-d { background: #a80c38; }
.bar-e { background: #bd1a3b; }
.bar-label { text-align: center; line-height: 20px; padding-top: 1px; color: #777; font-size: 12px; }

/* sheet tabs */
.tabs {
  height: 31px;
  box-sizing: border-box;
  display: flex;
  background: #e6e6e6;
  border-top: 1px solid #d4d4d4;
  border-bottom: 1px solid #d4d4d4;
  color: #777;
  font-size: 12.2px;
  flex: none;
}
.tab {
  box-sizing: border-box;
  display: flex;
  align-items: center;
  justify-content: center;
  gap: 5px;
  padding-top: 2px;
  border-right: 1px solid #d4d4d4;
}
.tab-ds { width: 130px; justify-content: flex-start; padding-left: 8px; }
.tab-sheet { width: 57px; }
.tab-on { background: #fff; color: #555; font-weight: 700; padding-top: 0; margin-bottom: -1px; }
.tab-dash { width: 102px; }
.tab-add { width: 32px; padding-top: 0; }

.status {
  height: 21px;
  box-sizing: border-box;
  padding-top: 1px;
  display: flex;
  align-items: center;
  background: #ececec;
  border-bottom: 1px solid #ccc;
  font-size: 11.5px;
  color: #555;
  flex: none;
}
.st-marks { width: 60px; padding-left: 3px; box-sizing: border-box; }
.st-rows { width: 114px; }
.st-cells { margin-left: auto; display: flex; height: 100%; }
.st-cell { height: 100%; box-sizing: border-box; border-left: 1px solid #d4d4d4; display: flex; align-items: center; }
.st-w127 { width: 127px; }
.st-w27 { width: 27px; }
.st-w47 { width: 47px; }
.st-nav { width: 71px; padding-left: 7px; }
.st-views { width: 68px; justify-content: space-around; padding: 0 2px; }

/* windows taskbar */
.taskbar {
  height: 40px;
  display: flex;
  align-items: center;
  background: #25330e;
  flex: none;
}
.start { width: 48px; height: 100%; display: flex; align-items: center; justify-content: center; padding-right: 4px; box-sizing: border-box; }
.task-search {
  width: 344px;
  height: 100%;
  box-sizing: border-box;
  background: #f2f2f2;
  display: flex;
  align-items: center;
  padding: 0 14px 0 10px;
  flex: none;
}
.cortana {
  width: 14px;
  height: 14px;
  border: 3px solid #111;
  border-radius: 50%;
  flex: none;
}
.task-search-text {
  margin-left: 10px;
  padding-top: 1px;
  font-family: "Open Sans", sans-serif;
  font-size: 14px;
  color: #222;
  flex: 1;
}
.task-ico {
  width: 49.29px;
  height: 100%;
  display: flex;
  align-items: center;
  justify-content: center;
  flex: none;
}
.task-tableau {
  width: 48px;
  background: #4c5540;
  border-bottom: 3px solid #76b9ed;
  box-sizing: border-box;
}
.tray {
  flex: 1;
  height: 100%;
  display: flex;
  align-items: center;
  padding-left: 294px;
  font-family: "Open Sans", sans-serif;
  font-size: 12px;
  color: #fff;
}
.tray-up { margin-left: 21px; }
.tray-batt { margin-left: 8px; }
.tray-wifi { margin-left: 11px; }
.tray-vol { margin-left: 8px; }
.tray-lang { margin-left: 10px; width: 30px; }
.clock { width: 70px; text-align: center; line-height: 20px; font-size: 11.5px; }
.tray-note { margin-left: 12px; }

/* show me overlay */
.showme-tab {
  position: absolute;
  left: 1251px;
  top: 48px;
  width: 111px;
  height: 37px;
  box-sizing: border-box;
  background: #fafafa;
  border: 1px solid #d4d4d4;
  border-width: 1px 0 0 1px;
  display: flex;
  align-items: center;
  gap: 6px;
  padding: 0 0 6px 11px;
  font-size: 13px;
  color: #444;
  z-index: 2;
}
.showme {
  position: absolute;
  left: 1159px;
  top: 85px;
  width: 203px;
  height: 555px;
  box-sizing: border-box;
  background: #fafafa;
  box-shadow: 2px 2px 3px rgba(0, 0, 0, 0.3);
  padding: 14px 0 0 13px;
}
.gallery {
  display: grid;
  grid-template-columns: repeat(3, 56px);
  grid-auto-rows: 42px;
  gap: 4px;
}
.thumb {
  box-sizing: border-box;
  border: 1px solid #dcdcdc;
  background: #fff;
  overflow: hidden;
}
.thumb svg { width: 100%; height: 100%; }
.thumb-sel { border: 2px solid #e0692f; }
.tiny text { font-size: 4.5px; fill: #777; font-family: "Lato", sans-serif; }
.hint { padding-left: 2px; color: #444; font-size: 12px; }
.hint b { color: #222; }
.hint-top { margin-top: 18px; line-height: 16px; }
.hint-row { display: flex; align-items: center; height: 28px; font-size: 12.5px; }
.hint-a { margin-top: 5px; }
```
